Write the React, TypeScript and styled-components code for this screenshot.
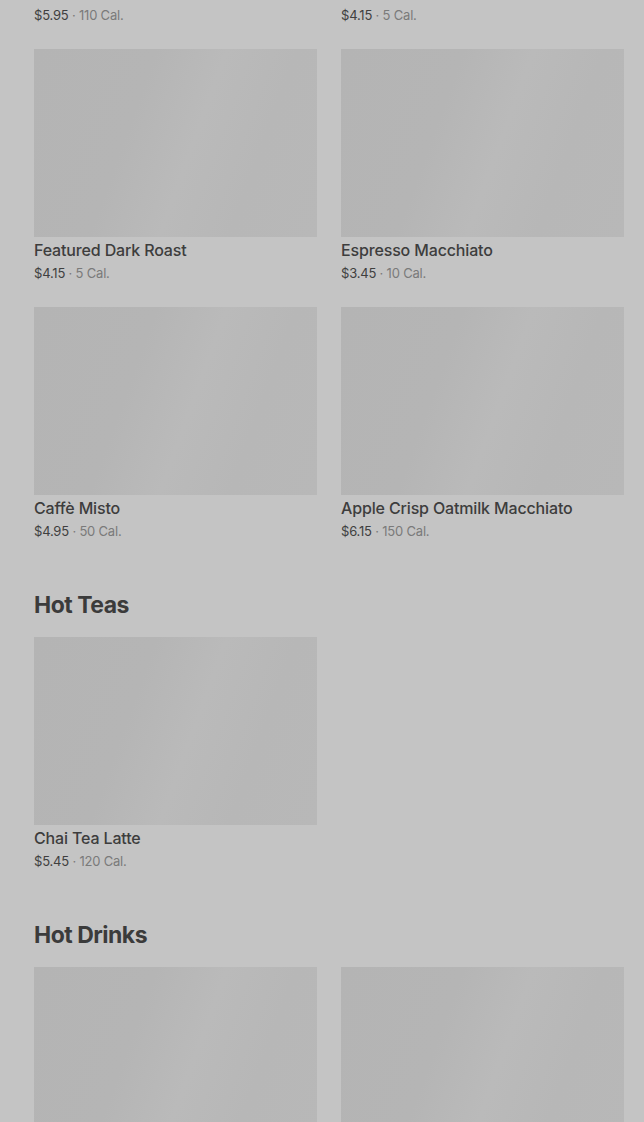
import React from 'react';
import styled, { createGlobalStyle } from 'styled-components';

type Item = { name: string; price: string; cal: string };

const sections: { title?: string; items: Item[] }[] = [
  {
    items: [
      { name: 'Caffè Latte', price: '$5.95', cal: '110 Cal.' },
      { name: 'Pike Place® Roast', price: '$4.15', cal: '5 Cal.' },
      { name: 'Featured Dark Roast', price: '$4.15', cal: '5 Cal.' },
      { name: 'Espresso Macchiato', price: '$3.45', cal: '10 Cal.' },
      { name: 'Caffè Misto', price: '$4.95', cal: '50 Cal.' },
      { name: 'Apple Crisp Oatmilk Macchiato', price: '$6.15', cal: '150 Cal.' },
    ],
  },
  {
    title: 'Hot Teas',
    items: [{ name: 'Chai Tea Latte', price: '$5.45', cal: '120 Cal.' }],
  },
  {
    title: 'Hot Drinks',
    items: [
      { name: 'Hot Chocolate', price: '$4.45', cal: '370 Cal.' },
      { name: 'Steamed Milk', price: '$3.65', cal: '200 Cal.' },
    ],
  },
];

export default function App() {
  return (
    <>
      <GlobalStyle />
      <Page>
        {sections.map((section, i) => (
          <Section key={i}>
            {section.title && <Heading>{section.title}</Heading>}
            <Grid>
              {section.items.map(item => (
                <Card key={item.name}>
                  <Thumb />
                  <Name>{item.name}</Name>
                  <Meta>
                    <Price>{item.price}</Price>
                    <Cal> · {item.cal}</Cal>
                  </Meta>
                </Card>
              ))}
            </Grid>
          </Section>
        ))}
      </Page>
    </>
  );
}

const GlobalStyle = createGlobalStyle`
  html, body {
    margin: 0;
    padding: 0;
    background: #c4c4c4;
    overflow: hidden;
  }
  body {
    font-family: Inter, 'Noto Sans', sans-serif;
    -webkit-font-smoothing: antialiased;
  }
`;

const Page = styled.main`
  margin-top: -209px;
  padding: 0 20px 0 34px;
  display: flex;
  flex-direction: column;
  gap: 48px;
  background: #c4c4c4;
  min-height: 1400px;
`;

const Section = styled.section`
  display: flex;
  flex-direction: column;
  gap: 16px;
`;

const Heading = styled.h2`
  margin: 0;
  font-size: 23px;
  line-height: 32px;
  font-weight: 700;
  letter-spacing: -0.5px;
  color: #3b3b3b;
`;

const Grid = styled.div`
  display: grid;
  grid-template-columns: 283px 283px;
  column-gap: 24px;
  row-gap: 24px;
`;

const Card = styled.div`
  display: flex;
  flex-direction: column;
`;

const Thumb = styled.div`
  height: 188px;
  background: linear-gradient(
    110deg,
    #b4b4b4 0%,
    #b5b5b5 35%,
    #bababa 55%,
    #b7b7b7 75%,
    #b8b8b8 100%
  );
`;

const Name = styled.div`
  margin-top: 2px;
  font-size: 16px;
  line-height: 22px;
  font-weight: 500;
  color: #3d3d3d;
  letter-spacing: -0.15px;
`;

const Meta = styled.div`
  margin-top: 2px;
  font-size: 13px;
  line-height: 20px;
  letter-spacing: -0.2px;
`;

const Price = styled.span`
  color: #3f3f3f;
`;

const Cal = styled.span`
  color: #7a7a7a;
`;
